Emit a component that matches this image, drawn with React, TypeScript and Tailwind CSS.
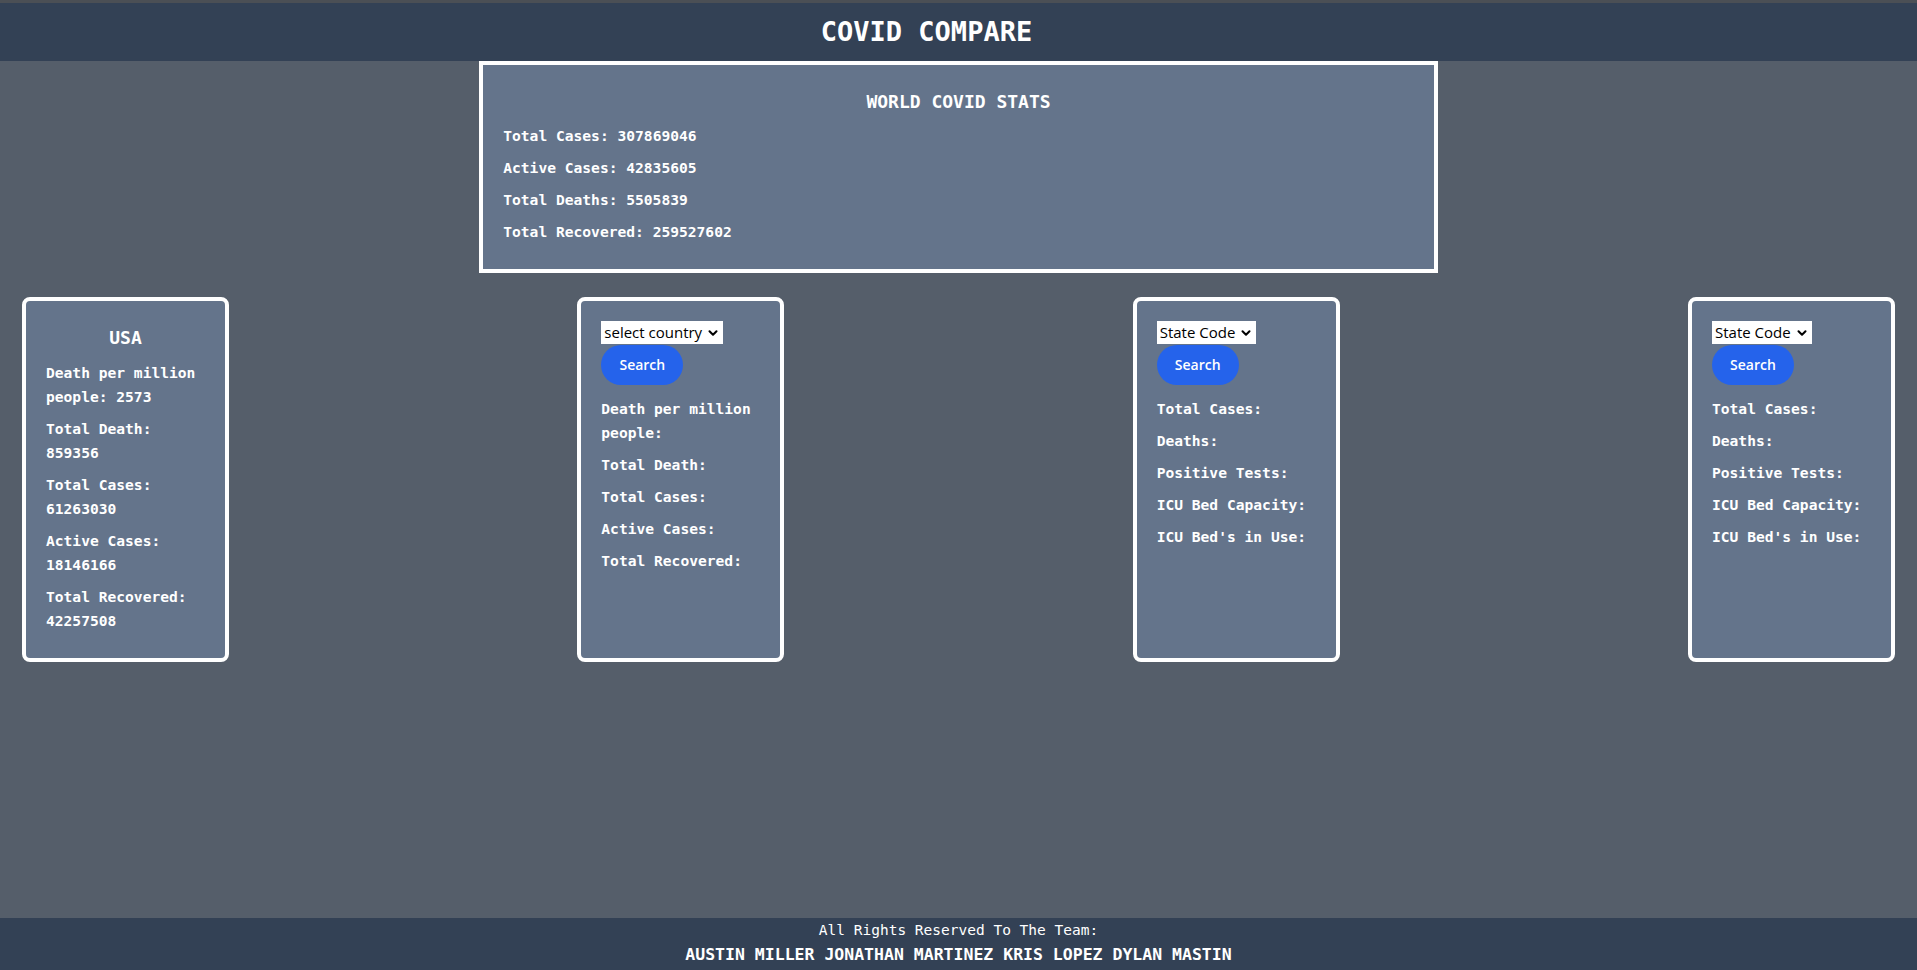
import { ChevronDown } from "lucide-react";

const world = [
  { label: "Total Cases", value: "307869046" },
  { label: "Active Cases", value: "42835605" },
  { label: "Total Deaths", value: "5505839" },
  { label: "Total Recovered", value: "259527602" },
];

const usa = [
  { label: "Death per million people", value: "2573" },
  { label: "Total Death", value: "859356" },
  { label: "Total Cases", value: "61263030" },
  { label: "Active Cases", value: "18146166" },
  { label: "Total Recovered", value: "42257508" },
];

const countryFields = ["Death per million people", "Total Death", "Total Cases", "Active Cases", "Total Recovered"];
const stateFields = ["Total Cases", "Deaths", "Positive Tests", "ICU Bed Capacity", "ICU Bed's in Use"];

const mono = "font-['DejaVu_Sans_Mono',Consolas,monospace]";

function Picker({ label }: { label: string }) {
  return (
    <div className="flex h-[23px] w-fit items-center gap-1 bg-white px-[3px] font-['Open_Sans',sans-serif] text-[15px] font-normal leading-none text-black">
      <span>{label}</span>
      <ChevronDown className="h-3.5 w-3.5" strokeWidth={3.5} />
    </div>
  );
}

function SearchButton() {
  return (
    <button className="mt-px h-10 w-[82px] rounded-full bg-[#2563eb] font-['Open_Sans',sans-serif] text-[14px] font-semibold text-white">
      Search
    </button>
  );
}

function Card({ children }: { children: React.ReactNode }) {
  return (
    <div className={`w-[207px] rounded-lg border-4 border-white bg-[#64748b] px-5 pt-5 pb-[25px] text-[14.6px] font-bold leading-6 text-white ${mono}`}>
      {children}
    </div>
  );
}

function Lines({ items }: { items: string[] }) {
  return (
    <div className="mt-3 flex flex-col gap-2">
      {items.map((f) => (
        <p key={f}>{f}:</p>
      ))}
    </div>
  );
}

export default function App() {
  return (
    <div className="flex min-h-[970px] flex-col bg-[#555e6a] text-white">
      <div className="h-[3px] bg-[#4b4f55]" />
      <header className={`flex h-[58px] items-center justify-center bg-[#334155] pr-16 ${mono}`}>
        <h1 className="text-[27px] font-bold">COVID COMPARE</h1>
      </header>

      <main className="flex-1">
        <section className={`mx-auto w-1/2 border-4 border-white bg-[#64748b] px-5 pt-[25px] pb-[25px] ${mono}`}>
          <h2 className="text-center text-[18px] font-bold leading-6">WORLD COVID STATS</h2>
          <div className="mt-[10px] flex flex-col gap-2 text-[14.6px] font-bold leading-6">
            {world.map((w) => (
              <p key={w.label}>
                {w.label}: {w.value}
              </p>
            ))}
          </div>
        </section>

        <div className="mt-6 flex justify-between px-[22px]">
          <Card>
            <h2 className="text-center text-[18px] leading-[34px]">USA</h2>
            <div className="mt-[6px] flex flex-col gap-2">
              {usa.map((u) => (
                <p key={u.label}>
                  {u.label}: {u.value}
                </p>
              ))}
            </div>
          </Card>
          <Card>
            <Picker label="select country" />
            <SearchButton />
            <Lines items={countryFields} />
          </Card>
          <Card>
            <Picker label="State Code" />
            <SearchButton />
            <Lines items={stateFields} />
          </Card>
          <Card>
            <Picker label="State Code" />
            <SearchButton />
            <Lines items={stateFields} />
          </Card>
        </div>
      </main>

      <footer className={`flex h-[52px] flex-col items-center justify-center bg-[#334155] ${mono}`}>
        <p className="text-[14.5px] leading-[21px]">All Rights Reserved To The Team:</p>
        <p className="text-[16.5px] font-bold leading-[27px]">AUSTIN MILLER JONATHAN MARTINEZ KRIS LOPEZ DYLAN MASTIN</p>
      </footer>
    </div>
  );
}
